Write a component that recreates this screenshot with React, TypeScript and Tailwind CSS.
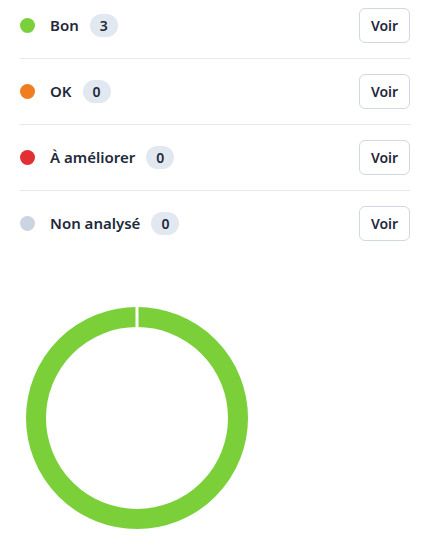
import React from 'react';

const rows = [
  { label: 'Bon', count: 3, color: 'bg-[#7ad03a]' },
  { label: 'OK', count: 0, color: 'bg-[#f07d1f]' },
  { label: 'À améliorer', count: 0, color: 'bg-[#e03034]' },
  { label: 'Non analysé', count: 0, color: 'bg-[#cbd5e1]' },
];

export default function App() {
  return (
    <div className="w-[436px] h-[546px] bg-white overflow-hidden text-[#1e293b]" style={{ fontFamily: '"Noto Sans", "Open Sans", sans-serif' }}>
      <div className="pl-5 pr-[26px]">
        {rows.map((r, i) => (
          <div
            key={r.label}
            className={`flex items-center justify-between pb-[15px] ${i === 0 ? 'pt-2' : 'pt-[15px]'} ${i < rows.length - 1 ? 'border-b border-[#e5e7eb]' : ''}`}
          >
            <div className="flex items-center">
              <span className={`w-[15px] h-[15px] rounded-full ${r.color}`} />
              <span className="ml-[15px] text-[15px] font-semibold">{r.label}</span>
              <span className="ml-[11px] h-[23px] min-w-[28px] px-2 rounded-full bg-[#e2e8f0] flex items-center justify-center text-[14px] font-semibold">
                {r.count}
              </span>
            </div>
            <button className="h-[35px] w-[51px] rounded-md border border-[#cfd8e3] bg-white text-[14px] font-semibold flex items-center justify-center">
              Voir
            </button>
          </div>
        ))}
      </div>
      <div className="pl-[26px] pt-[51px]">
        <svg className="block" width="222" height="222" viewBox="0 0 222 222">
          <circle cx="111" cy="111" r="101" fill="none" stroke="#7bd03a" strokeWidth="20" />
          <rect x="109.5" y="0" width="3" height="22" fill="#ffffff" />
        </svg>
      </div>
    </div>
  );
}
